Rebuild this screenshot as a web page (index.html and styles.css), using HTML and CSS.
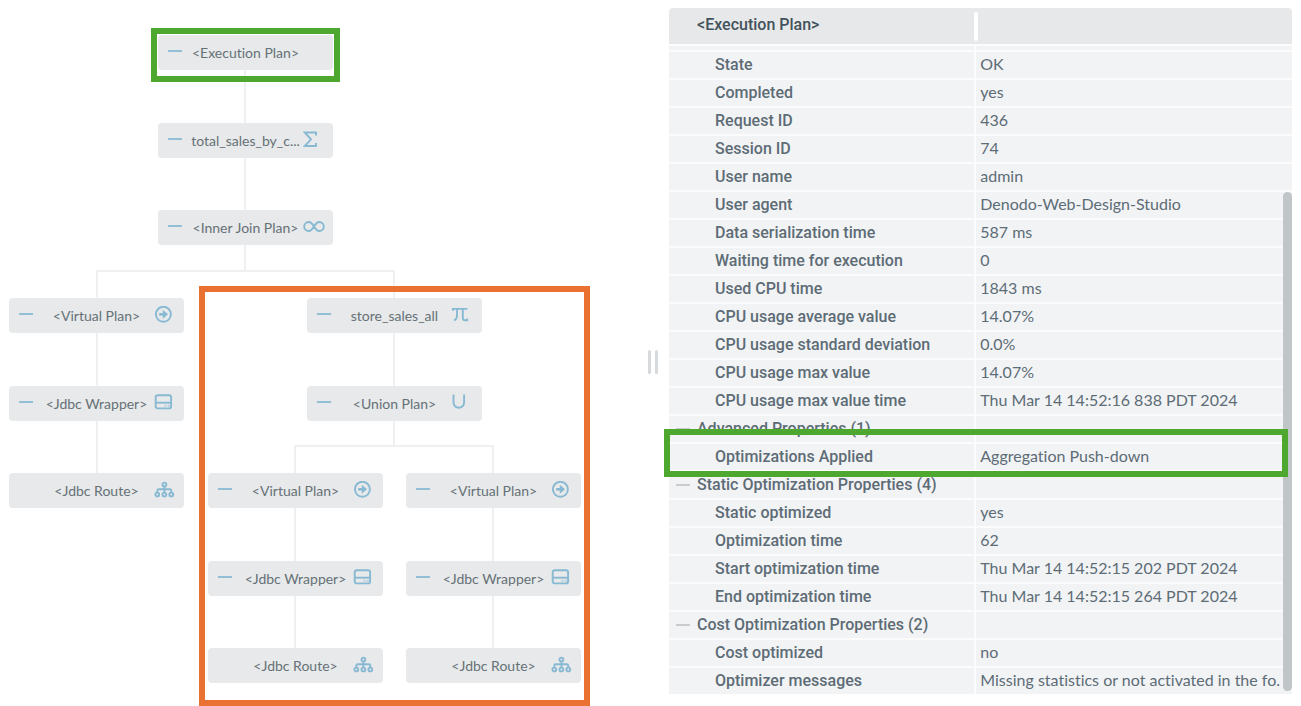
FILE: index.html
```html
<!DOCTYPE html>
<html lang="en">
<head>
<meta charset="utf-8">
<title>Execution Plan</title>
<link rel="stylesheet" href="styles.css">
</head>
<body>
<svg class="symbols" aria-hidden="true">
  <symbol id="sigma" viewBox="0 0 22 18"><path d="M13 4.500V1.500H1.800L8 8.300L1.800 15H13V12"/></symbol>
  <symbol id="join" viewBox="0 0 22 18"><path d="M11 8.500C9.300 5.600 8 4 5.700 4a4.500 4.500 0 0 0 0 9C8 13 9.300 11.400 11 8.500S14 4 16.300 4a4.500 4.500 0 0 1 0 9C14 13 12.700 11.400 11 8.500Z"/></symbol>
  <symbol id="virtual" viewBox="0 0 22 18"><circle cx="9.400" cy="8.300" r="7.500"/><path class="thick" d="M5.200 8.300H10"/><path class="solid" d="M8.800 3.800L14 8.300L8.800 12.800Z"/></symbol>
  <symbol id="drive" viewBox="0 0 22 18"><rect x="1.700" y="1.200" width="15.400" height="13.200" rx="2"/><path d="M2 8.700H17"/><path class="faint" d="M10.500 11.700h2M13.700 11.700h2"/></symbol>
  <symbol id="route" viewBox="0 0 22 18"><circle cx="10.400" cy="3.500" r="1.900"/><circle cx="3.300" cy="13.500" r="1.900"/><circle cx="10.400" cy="13.500" r="1.900"/><circle cx="17.300" cy="13.500" r="1.900"/><path d="M10.400 5.500V11.500M3.300 11.500V9.800Q3.300 8.300 4.800 8.300H15.800Q17.300 8.300 17.300 9.800V11.500"/></symbol>
  <symbol id="pi" viewBox="0 0 22 18"><path d="M.8 4.800V2.900H15.300M5 3V9Q5 13.500 2 14.200M10.800 3V12Q10.800 14.200 12.800 14.200H15.200V12.600"/></symbol>
  <symbol id="union" viewBox="0 0 22 18"><path d="M1.500 .5V8.500A5.300 5.300 0 0 0 12.100 8.500V.5"/></symbol>
</svg>
<main class="layout">
  <section class="diagram" aria-label="Execution plan tree">
    <svg class="links" width="600" height="700" aria-hidden="true">
      <path d="M245 70V271M97 490V271H394V446M295 665V446H493V665"/>
    </svg>
    <div class="node c-root r1"><button class="toggle" aria-label="Collapse"></button><span class="name">&lt;Execution Plan&gt;</span></div>
    <div class="node c-root r2"><button class="toggle" aria-label="Collapse"></button><span class="name">total_sales_by_c...</span><svg class="icon"><use href="#sigma"/></svg></div>
    <div class="node c-root r3"><button class="toggle" aria-label="Collapse"></button><span class="name">&lt;Inner Join Plan&gt;</span><svg class="icon"><use href="#join"/></svg></div>
    <div class="node c-left r4"><button class="toggle" aria-label="Collapse"></button><span class="name">&lt;Virtual Plan&gt;</span><svg class="icon"><use href="#virtual"/></svg></div>
    <div class="node c-left r5"><button class="toggle" aria-label="Collapse"></button><span class="name">&lt;Jdbc Wrapper&gt;</span><svg class="icon"><use href="#drive"/></svg></div>
    <div class="node c-left r6"><span class="name">&lt;Jdbc Route&gt;</span><svg class="icon"><use href="#route"/></svg></div>
    <div class="node c-union r4"><button class="toggle" aria-label="Collapse"></button><span class="name">store_sales_all</span><svg class="icon"><use href="#pi"/></svg></div>
    <div class="node c-union r5"><button class="toggle" aria-label="Collapse"></button><span class="name">&lt;Union Plan&gt;</span><svg class="icon"><use href="#union"/></svg></div>
    <div class="node c-first r6"><button class="toggle" aria-label="Collapse"></button><span class="name">&lt;Virtual Plan&gt;</span><svg class="icon"><use href="#virtual"/></svg></div>
    <div class="node c-first r7"><button class="toggle" aria-label="Collapse"></button><span class="name">&lt;Jdbc Wrapper&gt;</span><svg class="icon"><use href="#drive"/></svg></div>
    <div class="node c-first r8"><span class="name">&lt;Jdbc Route&gt;</span><svg class="icon"><use href="#route"/></svg></div>
    <div class="node c-second r6"><button class="toggle" aria-label="Collapse"></button><span class="name">&lt;Virtual Plan&gt;</span><svg class="icon"><use href="#virtual"/></svg></div>
    <div class="node c-second r7"><button class="toggle" aria-label="Collapse"></button><span class="name">&lt;Jdbc Wrapper&gt;</span><svg class="icon"><use href="#drive"/></svg></div>
    <div class="node c-second r8"><span class="name">&lt;Jdbc Route&gt;</span><svg class="icon"><use href="#route"/></svg></div>
    <div class="callout callout-plan"></div>
    <div class="callout callout-branch"></div>
  </section>
  <div class="splitter" role="separator" aria-orientation="vertical"><span></span><span></span></div>
  <section class="details">
    <table class="props">
      <colgroup><col class="col-key"><col></colgroup>
      <thead><tr><th scope="col">&lt;Execution Plan&gt;</th><th class="grip-cell"><span class="grip"></span></th></tr></thead>
      <tbody>
        <tr class="sliver"><td></td><td></td></tr>
        <tr><th scope="row">State</th><td>OK</td></tr>
        <tr><th scope="row">Completed</th><td>yes</td></tr>
        <tr><th scope="row">Request ID</th><td>436</td></tr>
        <tr><th scope="row">Session ID</th><td>74</td></tr>
        <tr><th scope="row">User name</th><td>admin</td></tr>
        <tr><th scope="row">User agent</th><td>Denodo-Web-Design-Studio</td></tr>
        <tr><th scope="row">Data serialization time</th><td>587 ms</td></tr>
        <tr><th scope="row">Waiting time for execution</th><td>0</td></tr>
        <tr><th scope="row">Used CPU time</th><td>1843 ms</td></tr>
        <tr><th scope="row">CPU usage average value</th><td>14.07%</td></tr>
        <tr><th scope="row">CPU usage standard deviation</th><td>0.0%</td></tr>
        <tr><th scope="row">CPU usage max value</th><td>14.07%</td></tr>
        <tr><th scope="row">CPU usage max value time</th><td>Thu Mar 14 14:52:16 838 PDT 2024</td></tr>
        <tr class="group"><th scope="row"><div class="group-head"><button class="toggle" aria-label="Collapse"></button>Advanced Properties (1)</div></th><td></td></tr>
        <tr><th scope="row">Optimizations Applied</th><td>Aggregation Push-down</td></tr>
        <tr class="group"><th scope="row"><div class="group-head"><button class="toggle" aria-label="Collapse"></button>Static Optimization Properties (4)</div></th><td></td></tr>
        <tr><th scope="row">Static optimized</th><td>yes</td></tr>
        <tr><th scope="row">Optimization time</th><td>62</td></tr>
        <tr><th scope="row">Start optimization time</th><td>Thu Mar 14 14:52:15 202 PDT 2024</td></tr>
        <tr><th scope="row">End optimization time</th><td>Thu Mar 14 14:52:15 264 PDT 2024</td></tr>
        <tr class="group"><th scope="row"><div class="group-head"><button class="toggle" aria-label="Collapse"></button>Cost Optimization Properties (2)</div></th><td></td></tr>
        <tr><th scope="row">Cost optimized</th><td>no</td></tr>
        <tr><th scope="row">Optimizer messages</th><td>Missing statistics or not activated in the fo.</td></tr>
      </tbody>
    </table>
    <div class="thumb"></div>
    <div class="callout callout-row"></div>
  </section>
</main>
</body>
</html>
```

FILE: styles.css
```css
* { box-sizing: border-box; }
body {
  margin: 0;
  background: #fff;
  color: #5d6c75;
  font-family: Roboto, "Liberation Sans", sans-serif;
  font-size: 16px;
  font-variant-ligatures: none;
}
.symbols { position: absolute; width: 0; height: 0; }
.layout {
  display: grid;
  grid-template-columns: minmax(0, 643fr) 26px minmax(0, 623fr);
  min-height: 706px;
  padding-right: 9px;
}

/* Plan tree */
.diagram { position: relative; }
.links { position: absolute; left: 0; top: 0; fill: none; stroke: #eff0f1; stroke-width: 2; }
.node {
  position: absolute;
  display: grid;
  grid-template-columns: 28px 119px 28px;
  align-items: center;
  width: 175px;
  height: 35px;
  border-radius: 4px;
  background: #e7e9ea;
  color: #667177;
  font-family: Lato, "Liberation Sans", sans-serif;
  font-size: 14px;
  line-height: 20px;
}
.name { grid-column: 2; grid-row: 1; text-align: center; white-space: nowrap; }
.icon {
  grid-column: 3;
  grid-row: 1;
  width: 22px;
  height: 18px;
  margin: 0 0 1px -2px;
  fill: none;
  stroke: #88b9d3;
  stroke-width: 1.9;
}
.solid { fill: #88b9d3; stroke: none; }
.thick { stroke-width: 2.6; }
.faint { stroke: #b4cedc; }
.toggle {
  width: 14px;
  height: 2px;
  padding: 0;
  border: 0;
  background: #93bed5;
}
.node .toggle { grid-column: 1; grid-row: 1; margin: 0 0 3px 10px; }
.c-root { left: 158px; }
.c-left { left: 9px; }
.c-union { left: 307px; }
.c-first { left: 208px; }
.c-second { left: 406px; }
.r1 { top: 35px; }
.r2 { top: 123px; }
.r3 { top: 210px; }
.r4 { top: 298px; }
.r5 { top: 386px; }
.r6 { top: 473px; }
.r7 { top: 561px; }
.r8 { top: 648px; }

/* Highlight frames */
.callout { position: absolute; border: 6px solid #4ea72e; pointer-events: none; }
.callout-plan { left: 151px; top: 28px; width: 189px; height: 54px; }
.callout-branch { left: 199px; top: 286px; width: 391px; height: 420px; border-color: #e97132; }
.callout-row { left: -5px; right: 4px; top: 429px; height: 48px; }

.splitter {
  display: flex;
  gap: 4px;
  height: 24px;
  margin-top: 350px;
  padding-left: 5px;
}
.splitter span { width: 3px; border-radius: 2px; background: #d6dadc; }

/* Property table */
.details { position: relative; padding-top: 8px; }
.props { width: 100%; table-layout: fixed; border-spacing: 0; }
.col-key { width: 49%; }
.props th, .props td {
  height: 28px;
  padding: 0;
  border-top: 2px solid #fcfcfd;
  background: #f2f3f5;
  line-height: 20px;
  text-align: left;
  white-space: nowrap;
}
.props th { padding-left: 46px; font-weight: 500; }
.props td {
  padding: 0 0 2px 4px;
  border-left: 2px solid #fcfcfd;
  font-family: Lato, "Liberation Sans", sans-serif;
}
.props thead th {
  height: 36px;
  padding: 0 0 2px 28px;
  border: 0;
  background: #e6e8e9;
  color: #43525b;
}
.props thead th:first-child { border-top-left-radius: 4px; }
.props thead th.grip-cell { padding: 0; border-top-right-radius: 4px; }
.grip { display: block; width: 4px; height: 29px; border-radius: 2px; background: #fff; }
.props .sliver td { height: 6px; padding: 0; }
.props .sliver td:first-child { border-left: 0; }
.props .group th { padding-left: 7px; }
.group-head { display: flex; align-items: center; gap: 7px; }
.group .toggle { background: #c9ccce; }
.thumb {
  position: absolute;
  right: 0;
  top: 192px;
  width: 9px;
  height: 499px;
  border-radius: 5px;
  background: #c0c5c8;
}
```
